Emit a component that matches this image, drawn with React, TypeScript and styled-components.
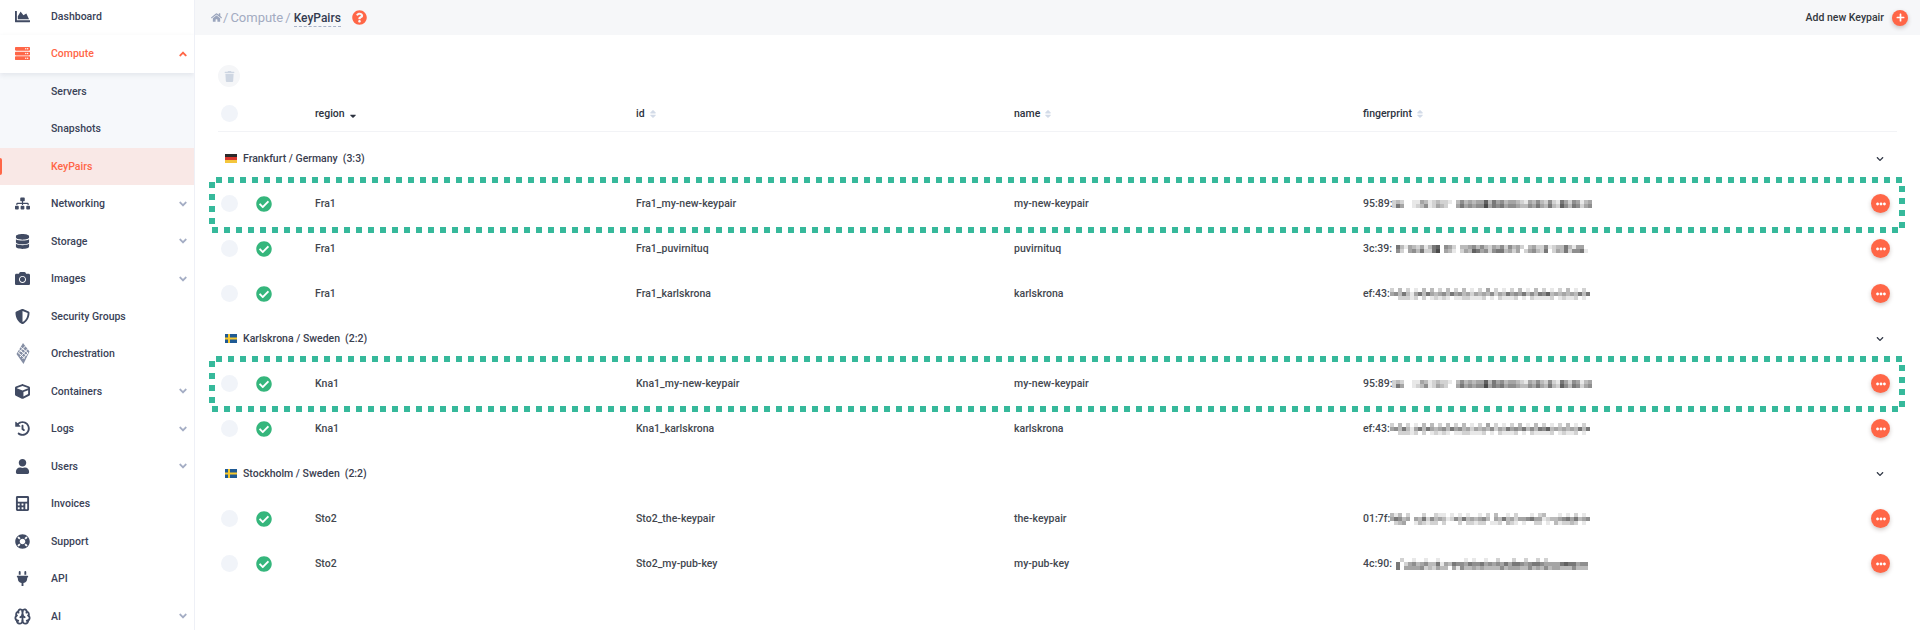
import styled, { createGlobalStyle } from "styled-components";
import {
  FaAngleDown,
  FaAngleUp,
  FaCalculator,
  FaCamera,
  FaChartArea,
  FaCheckCircle,
  FaChevronDown,
  FaCube,
  FaDatabase,
  FaEllipsisH,
  FaHistory,
  FaHome,
  FaLifeRing,
  FaPlug,
  FaPlus,
  FaQuestionCircle,
  FaServer,
  FaShieldAlt,
  FaSitemap,
  FaSort,
  FaSortDown,
  FaTrash,
  FaUser,
} from "react-icons/fa";
import { Brain } from "lucide-react";
import type { ReactNode } from "react";

const coral = "#ff6647";
const ink = "#3a4257";

const GlobalStyle = createGlobalStyle`
  html, body {
    margin: 0;
    background: #fff;
    font-family: Roboto, "Liberation Sans", sans-serif;
  }
`;

const Root = styled.div`
  display: flex;
  height: 630px;
  overflow: hidden;
`;

const Sidebar = styled.aside`
  flex: 0 0 194px;
  border-right: 1px solid #eef0f6;
  overflow: hidden;
`;

const Nav = styled.nav`
  margin-top: -2.5px;
`;

const NavRow = styled.div<{ $open?: boolean; $active?: boolean; $sub?: boolean }>`
  position: relative;
  display: flex;
  align-items: center;
  box-sizing: border-box;
  height: 37.5px;
  padding: 0 6px 0 51px;
  font-size: 10.5px;
  font-weight: 500;
  color: ${(p) => (p.$open || p.$active ? coral : ink)};
  background: ${(p) => (p.$active ? "#f9e8e6" : p.$sub ? "#f6f8fb" : "#fff")};
  box-shadow: ${(p) => (p.$open ? "0 2px 5px rgba(60, 70, 100, 0.1)" : "none")};
  z-index: ${(p) => (p.$open ? 1 : 0)};
`;

const NavIcon = styled.span<{ $open?: boolean }>`
  position: absolute;
  left: 10px;
  width: 25px;
  display: flex;
  justify-content: center;
  font-size: 15px;
  color: ${(p) => (p.$open ? coral : "#414b63")};
`;

const NavLabel = styled.span`
  flex: 1;
`;

const NavArrow = styled.span<{ $open?: boolean }>`
  display: flex;
  justify-content: center;
  width: 10px;
  font-size: 12px;
  color: ${(p) => (p.$open ? coral : "#a4adc4")};
`;

const ActiveMark = styled.span`
  position: absolute;
  left: 0;
  top: 10px;
  width: 2px;
  height: 17px;
  border-radius: 0 2px 2px 0;
  background: ${coral};
`;

const Main = styled.main`
  flex: 1;
  min-width: 0;
`;

const TopBar = styled.header`
  display: flex;
  align-items: center;
  justify-content: space-between;
  height: 35px;
  padding: 0 12px 0 16px;
  background: #f6f7f9;
`;

const Crumbs = styled.div`
  display: flex;
  align-items: center;
  gap: 2px;
  font-size: 13px;
  color: #a3abc1;
`;

const HomeIcon = styled(FaHome)`
  font-size: 11px;
  margin-right: -1px;
  color: #9aa5bd;
`;

const CurrentCrumb = styled.span`
  margin: 2px 0 0 1px;
  padding-bottom: 1px;
  border-bottom: 1px dashed #a9b3c9;
  font-size: 12px;
  font-weight: 500;
  color: #333b50;
`;

const HelpIcon = styled(FaQuestionCircle)`
  margin-left: 9px;
  font-size: 15px;
  color: ${coral};
`;

const AddButton = styled.div`
  display: flex;
  align-items: center;
  gap: 8px;
  font-size: 10.5px;
  font-weight: 500;
  color: #333740;
`;

const RoundAction = styled.span<{ $size: number }>`
  display: flex;
  align-items: center;
  justify-content: center;
  flex: none;
  width: ${(p) => p.$size}px;
  height: ${(p) => p.$size}px;
  border-radius: 50%;
  color: #fff;
  font-size: ${(p) => Math.round(p.$size * 0.55)}px;
  background: ${coral};
  box-shadow: 0 2px 4px rgba(70, 40, 30, 0.25);
`;

const Content = styled.section`
  padding: 30px 23px 0;
`;

const TrashButton = styled.div`
  display: flex;
  align-items: center;
  justify-content: center;
  width: 22px;
  height: 22px;
  border-radius: 50%;
  background: #f5f6f8;
  color: #ced6e2;
  font-size: 11px;
`;

const columns = "38px 59px 321px 378px 349px 1fr 60px";

const HeadRow = styled.div`
  display: grid;
  grid-template-columns: ${columns};
  align-items: center;
  height: 35px;
  margin-top: 9px;
  border-bottom: 1px solid #f2f3f6;
  font-size: 10.5px;
  font-weight: 500;
  color: #2d3340;
`;

const HeadCell = styled.div`
  display: flex;
  align-items: center;
  gap: 3px;
`;

const SortIcon = styled(FaSort)`
  font-size: 10px;
  color: #d3dbe8;
`;

const SortActive = styled(FaSortDown)`
  font-size: 10px;
  color: #2d3340;
`;

const Check = styled.span`
  display: block;
  width: 17px;
  height: 17px;
  margin-left: 3px;
  border-radius: 50%;
  background: #f1f4f9;
`;

const Body = styled.div`
  margin-top: 4px;
`;

const GroupRow = styled.div`
  display: flex;
  align-items: center;
  height: 45px;
  padding: 0 13px 0 7px;
  font-size: 10.5px;
  font-weight: 500;
  color: #3a4050;
`;

const Flag = styled.svg`
  width: 12px;
  height: 9px;
  margin-right: 6px;
  flex: none;
`;

const Count = styled.span`
  margin-left: 5px;
`;

const GroupArrow = styled(FaChevronDown)`
  margin-left: auto;
  font-size: 8px;
  color: #333a48;
`;

const Row = styled.div`
  position: relative;
  display: grid;
  grid-template-columns: ${columns};
  align-items: center;
  height: 45px;
  font-size: 10.5px;
  font-weight: 500;
  color: #43474f;
`;

const StatusIcon = styled(FaCheckCircle)`
  display: block;
  font-size: 16px;
  color: #35b67c;
`;

const Print = styled.div`
  display: flex;
  align-items: center;
`;

const PrintHead = styled.span`
  flex: 0 0 27px;
  white-space: nowrap;
`;

const MoreCell = styled.div`
  display: flex;
  justify-content: flex-end;
  padding-right: 7px;
`;

const Highlight = styled.svg<{ $top: number }>`
  position: absolute;
  left: -9px;
  top: ${(p) => p.$top}px;
  width: 1696px;
  height: 56px;
  pointer-events: none;
`;

function Mosaic({ rows }: { rows: string[] }) {
  const width = Math.max(...rows.map((r) => r.length)) * 4;
  return (
    <svg width={width} height={rows.length * 4} style={{ flex: "none" }}>
      {rows.map((row, y) =>
        row.split("").map((d, x) =>
          d === "0" ? null : (
            <rect key={`${x}-${y}`} x={x * 4} y={y * 4} width={4} height={4} fill={`rgba(30,30,30,${Number(d) / 10})`} />
          ),
        ),
      )}
    </svg>
  );
}

function OrchestrationIcon() {
  return (
    <svg width="14" height="21" viewBox="0 0 14 21">
      <path d="M7 0l6.500 8.500L7.500 21 .5 11z" fill="#858ea4" />
      <g stroke="#fff" strokeWidth="1" fill="none">
        <path d="M3 6.500l7.500 6M2 9.500l7 6M4.500 4l7.500 6" />
        <path d="M9.500 3L3 9.500M11.500 6L4 14M12 10l-5.500 6" />
      </g>
    </svg>
  );
}

function GermanyFlag() {
  return (
    <Flag viewBox="0 0 12 9">
      <rect width="12" height="3" fill="#2a2a2a" />
      <rect y="3" width="12" height="3" fill="#d8372c" />
      <rect y="6" width="12" height="3" fill="#f4c63c" />
    </Flag>
  );
}

function SwedenFlag() {
  return (
    <Flag viewBox="0 0 12 9">
      <rect width="12" height="9" fill="#1f5a94" />
      <rect x="3" width="2" height="9" fill="#f7c92f" />
      <rect y="3.500" width="12" height="2" fill="#f7c92f" />
    </Flag>
  );
}

type NavItem = {
  label: string;
  icon?: ReactNode;
  arrow?: boolean;
  open?: boolean;
  sub?: boolean;
  active?: boolean;
};

const navItems: NavItem[] = [
  { label: "Dashboard", icon: <FaChartArea /> },
  { label: "Compute", icon: <FaServer />, arrow: true, open: true },
  { label: "Servers", sub: true },
  { label: "Snapshots", sub: true },
  { label: "KeyPairs", sub: true, active: true },
  { label: "Networking", icon: <FaSitemap />, arrow: true },
  { label: "Storage", icon: <FaDatabase />, arrow: true },
  { label: "Images", icon: <FaCamera />, arrow: true },
  { label: "Security Groups", icon: <FaShieldAlt /> },
  { label: "Orchestration", icon: <OrchestrationIcon /> },
  { label: "Containers", icon: <FaCube />, arrow: true },
  { label: "Logs", icon: <FaHistory />, arrow: true },
  { label: "Users", icon: <FaUser />, arrow: true },
  { label: "Invoices", icon: <FaCalculator /> },
  { label: "Support", icon: <FaLifeRing /> },
  { label: "API", icon: <FaPlug /> },
  { label: "AI", icon: <Brain size={17} strokeWidth={2.6} />, arrow: true },
];

const blur = {
  a: ["23200114312322103534344736453443214353252164254134", "26400123512432004645455846564554335464363275365245"],
  b: ["06314324136705420334535324352534203422512336314400", "05204536226804310243764525663424024532602436255610"],
  c: ["20302010303020302030102040201020301030201020301020", "45363146364345364534243435243645463536573434343636", "00222120201212101122111201021112010211112012112010"],
  d: ["31302000200211010101001020300102000102300010102010", "46534043625343125363434530436342445644123345646345", "02340013212202000202212201120321010022010312232010"],
  e: ["00200100100100000010100100200020020020200000000000", "06024534533614365546556454546466545665444467664550", "06044445232433041533434333353444335343534433353330"],
};

type RowData = {
  region: string;
  id: string;
  name: string;
  print: string;
  mosaic: string[];
  mark?: number;
};

const groups: { title: string; count: string; flag: ReactNode; rows: RowData[] }[] = [
  {
    title: "Frankfurt / Germany",
    count: "(3:3)",
    flag: <GermanyFlag />,
    rows: [
      { region: "Fra1", id: "Fra1_my-new-keypair", name: "my-new-keypair", print: "95:89:", mosaic: blur.a, mark: -4 },
      { region: "Fra1", id: "Fra1_puvirnituq", name: "puvirnituq", print: "3c:39:", mosaic: blur.b },
      { region: "Fra1", id: "Fra1_karlskrona", name: "karlskrona", print: "ef:43:", mosaic: blur.c },
    ],
  },
  {
    title: "Karlskrona / Sweden",
    count: "(2:2)",
    flag: <SwedenFlag />,
    rows: [
      { region: "Kna1", id: "Kna1_my-new-keypair", name: "my-new-keypair", print: "95:89:", mosaic: blur.a, mark: -5 },
      { region: "Kna1", id: "Kna1_karlskrona", name: "karlskrona", print: "ef:43:", mosaic: blur.c },
    ],
  },
  {
    title: "Stockholm / Sweden",
    count: "(2:2)",
    flag: <SwedenFlag />,
    rows: [
      { region: "Sto2", id: "Sto2_the-keypair", name: "the-keypair", print: "01:7f:", mosaic: blur.d },
      { region: "Sto2", id: "Sto2_my-pub-key", name: "my-pub-key", print: "4c:90:", mosaic: blur.e },
    ],
  },
];

export default function App() {
  return (
    <Root>
      <GlobalStyle />
      <Sidebar>
        <Nav>
          {navItems.map((item) => (
            <NavRow key={item.label} $open={item.open} $active={item.active} $sub={item.sub}>
              {item.active && <ActiveMark />}
              {item.icon && <NavIcon $open={item.open}>{item.icon}</NavIcon>}
              <NavLabel>{item.label}</NavLabel>
              {item.arrow && <NavArrow $open={item.open}>{item.open ? <FaAngleUp /> : <FaAngleDown />}</NavArrow>}
            </NavRow>
          ))}
        </Nav>
      </Sidebar>
      <Main>
        <TopBar>
          <Crumbs>
            <HomeIcon />
            <span>/</span>
            <span>Compute</span>
            <span>/</span>
            <CurrentCrumb>KeyPairs</CurrentCrumb>
            <HelpIcon />
          </Crumbs>
          <AddButton>
            Add new Keypair
            <RoundAction $size={16}>
              <FaPlus />
            </RoundAction>
          </AddButton>
        </TopBar>
        <Content>
          <TrashButton>
            <FaTrash />
          </TrashButton>
          <HeadRow>
            <Check />
            <span />
            <HeadCell>
              region <SortActive />
            </HeadCell>
            <HeadCell>
              id <SortIcon />
            </HeadCell>
            <HeadCell>
              name <SortIcon />
            </HeadCell>
            <HeadCell>
              fingerprint <SortIcon />
            </HeadCell>
          </HeadRow>
          <Body>
            {groups.map((group) => (
              <div key={group.title}>
                <GroupRow>
                  {group.flag}
                  {group.title}
                  <Count>{group.count}</Count>
                  <GroupArrow />
                </GroupRow>
                {group.rows.map((row) => (
                  <Row key={row.id}>
                    <Check />
                    <StatusIcon />
                    <span>{row.region}</span>
                    <span>{row.id}</span>
                    <span>{row.name}</span>
                    <Print>
                      <PrintHead>{row.print}</PrintHead>
                      <Mosaic rows={row.mosaic} />
                    </Print>
                    <MoreCell>
                      <RoundAction $size={19}>
                        <FaEllipsisH />
                      </RoundAction>
                    </MoreCell>
                    {row.mark !== undefined && (
                      <Highlight $top={row.mark} viewBox="0 0 1696 56">
                        <rect
                          x="3"
                          y="3"
                          width="1690"
                          height="50"
                          fill="none"
                          stroke="#36b99b"
                          strokeWidth="6"
                          strokeDasharray="6 6"
                          strokeDashoffset="8"
                        />
                      </Highlight>
                    )}
                  </Row>
                ))}
              </div>
            ))}
          </Body>
        </Content>
      </Main>
    </Root>
  );
}
